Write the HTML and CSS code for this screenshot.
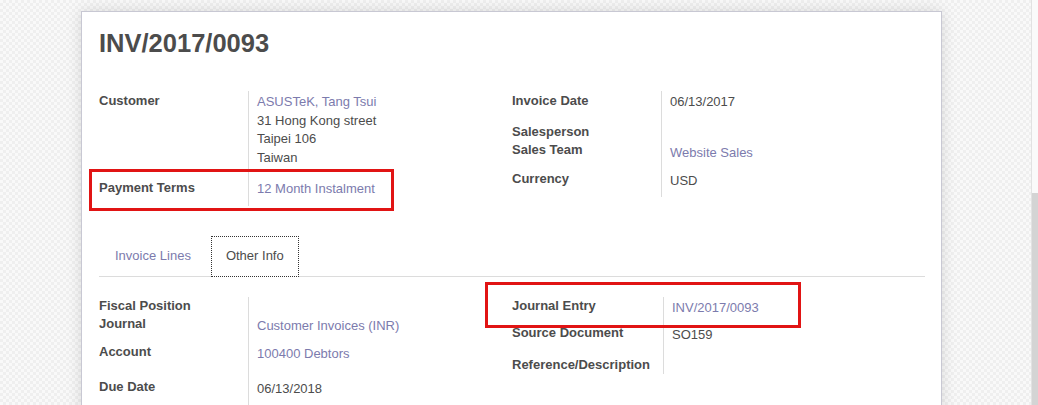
FILE: index.html
```html
<!DOCTYPE html>
<html>
<head>
<meta charset="utf-8">
<link rel="stylesheet" href="styles.css">
</head>
<body>
<div class="main">
  <div class="sheet">
    <h1 class="title">INV/2017/0093</h1>

    <div class="groups groups-top">
      <div class="group">
        <div class="row h87">
          <div class="lbl pt1">Customer</div>
          <div class="val pt2">
            <a class="link">ASUSTeK, Tang Tsui</a>
            <div>31 Hong Kong street</div>
            <div>Taipei 106</div>
            <div>Taiwan</div>
          </div>
        </div>
        <div class="row h28">
          <div class="lbl pt1">Payment Terms</div>
          <div class="val pt2"><a class="link">12 Month Instalment</a></div>
        </div>
      </div>
      <div class="group">
        <div class="row h31">
          <div class="lbl pt1">Invoice Date</div>
          <div class="val pt2">06/13/2017</div>
        </div>
        <div class="row h19">
          <div class="lbl pt1">Salesperson</div>
          <div class="val"></div>
        </div>
        <div class="row h28">
          <div class="lbl">Sales Team</div>
          <div class="val pt3"><a class="link">Website Sales</a></div>
        </div>
        <div class="row h28">
          <div class="lbl pt1">Currency</div>
          <div class="val pt3">USD</div>
        </div>
      </div>
    </div>

    <ul class="tabs">
      <li class="tab"><a class="link">Invoice Lines</a></li>
      <li class="tab active">Other Info</li>
    </ul>

    <div class="groups groups-bottom">
      <div class="group">
        <div class="row h18">
          <div class="lbl">Fiscal Position</div>
          <div class="val"></div>
        </div>
        <div class="row h28">
          <div class="lbl">Journal</div>
          <div class="val pt2"><a class="link">Customer Invoices (INR)</a></div>
        </div>
        <div class="row h35">
          <div class="lbl">Account</div>
          <div class="val pt2"><a class="link">100400 Debtors</a></div>
        </div>
        <div class="row h30">
          <div class="lbl">Due Date</div>
          <div class="val pt2">06/13/2018</div>
        </div>
      </div>
      <div class="group wide">
        <div class="row h27">
          <div class="lbl">Journal Entry</div>
          <div class="val pt2"><a class="link">INV/2017/0093</a></div>
        </div>
        <div class="row h32">
          <div class="lbl">Source Document</div>
          <div class="val pt2">SO159</div>
        </div>
        <div class="row h18">
          <div class="lbl">Reference/Description</div>
          <div class="val"></div>
        </div>
      </div>
    </div>

    <div class="mark mark-terms"></div>
    <div class="mark mark-journal"></div>
  </div>
</div>
<div class="scrollbar"><div class="thumb"></div></div>
</body>
</html>
```

FILE: styles.css
```css
html, body {
  height: 100%;
}
body {
  margin: 0;
  display: flex;
  overflow: hidden;
  font-family: "Liberation Sans", Arial, sans-serif;
  font-size: 13px;
  line-height: 1.42857;
  color: #4c4c4c;
  background-color: #f5f5f5;
  background-image: repeating-conic-gradient(#efefef 0 25%, #f9f9f9 0 50%);
  background-size: 6px 6px;
}
.main {
  flex: 1;
  overflow: hidden;
}
.sheet {
  position: relative;
  box-sizing: border-box;
  width: 861px;
  margin: 11px 0 0 81px;
  padding: 17px 16px 40px 17px;
  background: #fff;
  border: 1px solid #c8c8d3;
  box-shadow: 0 0 14px rgba(0, 0, 0, 0.13);
}
.title {
  margin: 0;
  font-size: 25.5px;
  line-height: 29px;
  font-weight: bold;
  color: #4c4c4c;
}
.groups {
  display: grid;
  grid-template-columns: 1fr 1fr;
  align-items: start;
}
.groups-top {
  margin-top: 33px;
}
.groups-bottom {
  margin-top: 20px;
}
.row {
  display: grid;
  grid-template-columns: 149px 1fr;
  box-sizing: border-box;
}
.wide .row {
  grid-template-columns: 151px 1fr;
}
.lbl {
  font-weight: bold;
  white-space: nowrap;
}
.val {
  border-left: 1px solid #dcdcdc;
  padding-left: 8px;
}
.pt1 { padding-top: 1px; }
.pt2 { padding-top: 2px; }
.pt3 { padding-top: 3px; }
.h18 { height: 18px; }
.h19 { height: 19px; }
.h27 { height: 27px; }
.h28 { height: 28px; }
.h30 { height: 30px; }
.h31 { height: 31px; }
.h32 { height: 32px; }
.h35 { height: 35px; }
.h87 { height: 87px; }
.link {
  color: #7c7bad;
  text-decoration: none;
}
.tabs {
  display: flex;
  list-style: none;
  margin: 30px 0 0;
  padding: 0;
  border-bottom: 1px solid #dcdcdc;
}
.tab {
  margin-bottom: -1px;
  padding: 10px 14px 10px 15px;
  border: 1px solid transparent;
  margin-right: 5px;
}
.tab.active {
  padding-left: 14px;
  background: #fff;
  border: 1px dotted #333;
  color: #4c4c4c;
}
.mark {
  position: absolute;
  border: 3px solid #e11414;
  box-sizing: border-box;
}
.mark-terms {
  left: 7px;
  top: 157px;
  width: 305px;
  height: 42px;
}
.mark-journal {
  left: 403px;
  top: 270px;
  width: 316px;
  height: 46px;
}
.scrollbar {
  width: 6px;
  flex: none;
  background: #fafafa;
  border-left: 1px solid #e2e2e2;
  display: flex;
  flex-direction: column;
}
.thumb {
  margin-top: 193px;
  flex: 1;
  background: #d4d4d4;
}
```
